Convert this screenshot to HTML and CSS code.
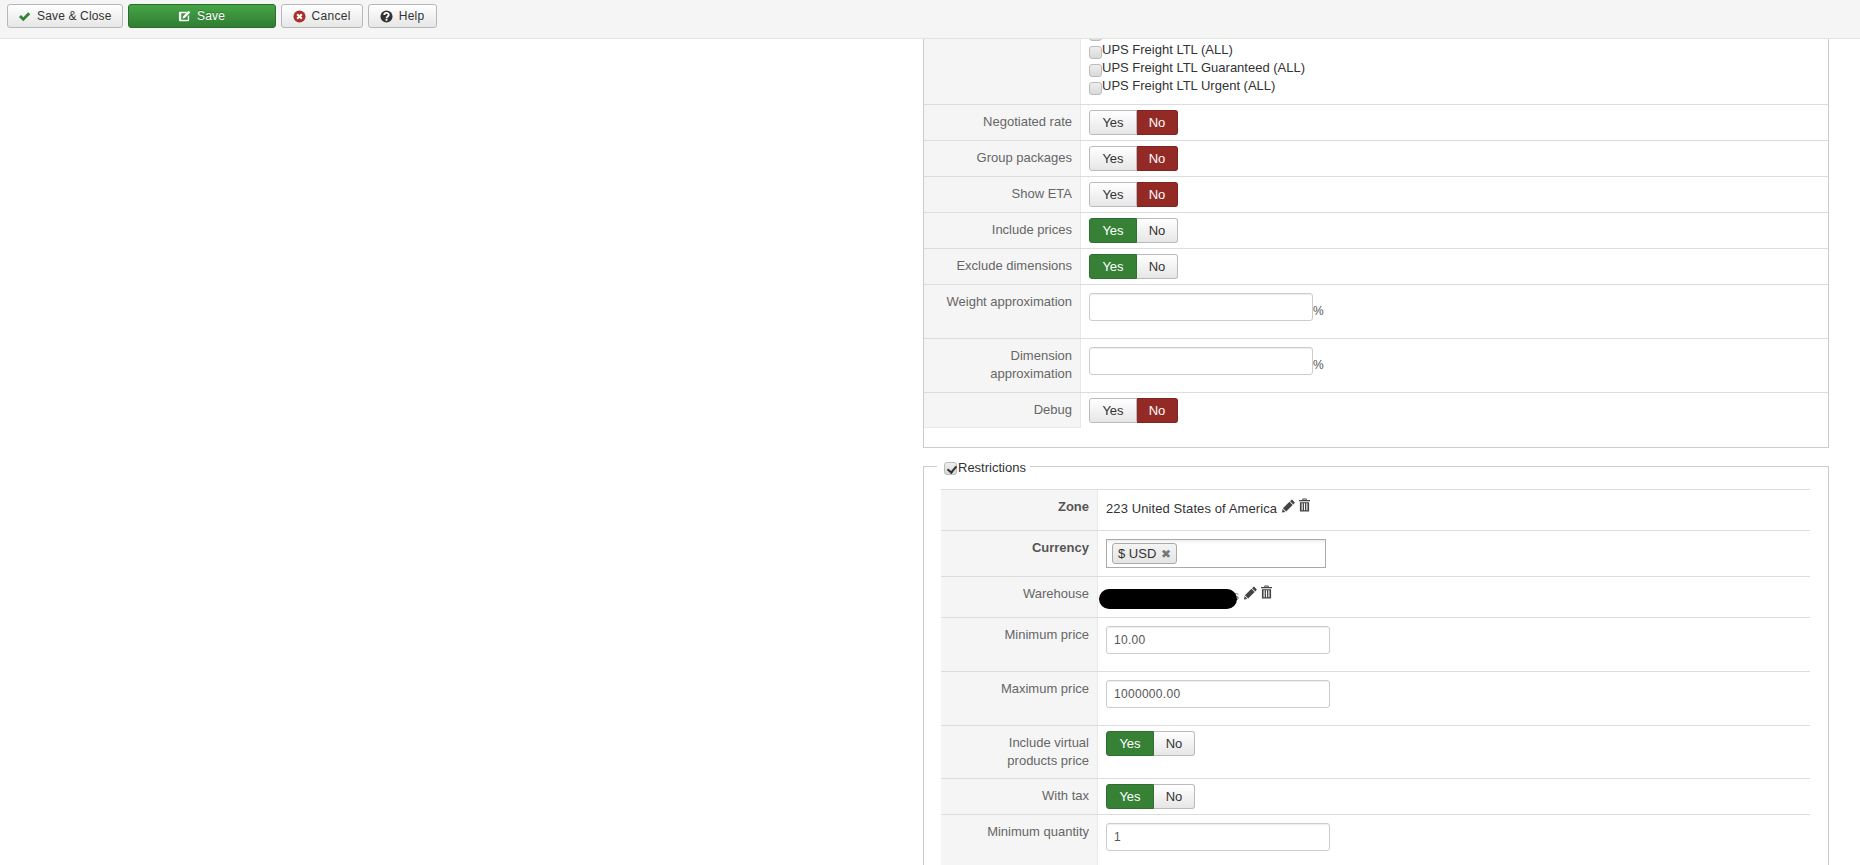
FILE: index.html
```html
<!DOCTYPE html>
<html lang="en">
<head>
<meta charset="utf-8">
<title>Shipping method</title>
<link rel="stylesheet" href="styles.css">
</head>
<body>
<svg class="sprites" width="0" height="0" aria-hidden="true">
  <symbol id="i-pencil" viewBox="0 0 14 14"><path d="M11.2.6l2.2 2.2c.4.4.4.9 0 1.3l-1.2 1.2-3.500-3.500 1.200-1.200c.4-.4.9-.4 1.300 0zM8 2.500l3.500 3.500-7 7-3.500-3.500zM.6 10.300l3.100 3.100-3.700.6z"/></symbol>
  <symbol id="i-trash" viewBox="0 0 12 14"><path d="M4 0h4l.6 1.500H12v1.500H0V1.500h3.400zM4.700 1l-.2.500h3l-.2-.5zM1 4h10v10H1zM2.800 5.200v7.600h1.200V5.200zm2.600 0v7.600h1.200V5.200zm2.600 0v7.600h1.200V5.200z" fill-rule="evenodd"/></symbol>
</svg>

<header class="toolbar">
  <button class="tb-btn" type="button">
    <svg class="tb-icon" viewBox="0 0 14 14"><path fill="#378137" d="M1 7.500l2.200-2.200 2.500 2.500L11 2.500l2.200 2.200-7.500 7.500z"/></svg>Save &amp; Close
  </button>
  <button class="tb-btn tb-primary" type="button">
    <svg class="tb-icon" viewBox="0 0 14 14"><path fill="#fff" fill-rule="evenodd" d="M2 2h8L8.500 3.500H3.500v7h7V7L12 5.500V11a1 1 0 0 1-1 1H2a1 1 0 0 1-1-1V3a1 1 0 0 1 1-1zM11.500.8l1.800 1.800-6 6-2.400.6.600-2.400z"/></svg>Save
  </button>
  <button class="tb-btn tb-roomy" type="button">
    <svg class="tb-icon" viewBox="0 0 14 14"><circle cx="7" cy="7" r="6.500" fill="#a9302a"/><path stroke="#fff" stroke-width="2.200" d="M4.500 4.500l5 5m0-5l-5 5"/></svg>Cancel
  </button>
  <button class="tb-btn tb-roomy" type="button">
    <svg class="tb-icon" viewBox="0 0 14 14"><circle cx="7" cy="7" r="6.500" fill="#333"/><path fill="none" stroke="#fff" stroke-width="2" d="M4.600 5.400c0-3 4.800-3 4.800-.2 0 1.800-2.400 1.600-2.400 3.600"/><rect x="6" y="9.600" width="2" height="2" fill="#fff"/></svg>Help
  </button>
</header>

<main class="page">
  <section class="box">
    <div class="row row-clipped">
      <div class="label"></div>
      <div class="value check-list">
        <label class="check-line"><input class="check" type="checkbox">UPS Freight LTL Standard (ALL)</label>
        <label class="check-line"><input class="check" type="checkbox">UPS Freight LTL (ALL)</label>
        <label class="check-line"><input class="check" type="checkbox">UPS Freight LTL Guaranteed (ALL)</label>
        <label class="check-line"><input class="check" type="checkbox">UPS Freight LTL Urgent (ALL)</label>
      </div>
    </div>
    <div class="row"><div class="label">Negotiated rate</div><div class="value"><div class="toggle"><span class="opt">Yes</span><span class="opt no-on">No</span></div></div></div>
    <div class="row"><div class="label">Group packages</div><div class="value"><div class="toggle"><span class="opt">Yes</span><span class="opt no-on">No</span></div></div></div>
    <div class="row"><div class="label">Show ETA</div><div class="value"><div class="toggle"><span class="opt">Yes</span><span class="opt no-on">No</span></div></div></div>
    <div class="row"><div class="label">Include prices</div><div class="value"><div class="toggle"><span class="opt yes-on">Yes</span><span class="opt">No</span></div></div></div>
    <div class="row"><div class="label">Exclude dimensions</div><div class="value"><div class="toggle"><span class="opt yes-on">Yes</span><span class="opt">No</span></div></div></div>
    <div class="row"><div class="label">Weight approximation</div><div class="value value-input"><input class="field" type="text"><span class="unit">%</span></div></div>
    <div class="row"><div class="label">Dimension<br>approximation</div><div class="value value-input"><input class="field" type="text"><span class="unit">%</span></div></div>
    <div class="row row-last"><div class="label">Debug</div><div class="value"><div class="toggle"><span class="opt">Yes</span><span class="opt no-on">No</span></div></div></div>
  </section>

  <fieldset class="restrictions">
    <legend class="legend"><input class="check check-on" type="checkbox" checked>Restrictions</legend>
    <div class="sub-table">
      <div class="row"><div class="label strong">Zone</div><div class="value value-text"><span>223 United States of America</span><svg class="act"><use href="#i-pencil"/></svg><svg class="act act-trash"><use href="#i-trash"/></svg></div></div>
      <div class="row"><div class="label strong">Currency</div><div class="value value-chosen"><div class="chosen"><span class="chip">$ USD <span class="chip-x">✖</span></span></div></div></div>
      <div class="row"><div class="label">Warehouse</div><div class="value value-text"><span class="redacted-wrap"><span class="redaction"></span>s</span><svg class="act"><use href="#i-pencil"/></svg><svg class="act act-trash"><use href="#i-trash"/></svg></div></div>
      <div class="row"><div class="label">Minimum price</div><div class="value value-input"><input class="field" type="text" value="10.00"></div></div>
      <div class="row"><div class="label">Maximum price</div><div class="value value-input"><input class="field" type="text" value="1000000.00"></div></div>
      <div class="row"><div class="label">Include virtual<br>products price</div><div class="value"><div class="toggle"><span class="opt yes-on">Yes</span><span class="opt">No</span></div></div></div>
      <div class="row"><div class="label">With tax</div><div class="value"><div class="toggle"><span class="opt yes-on">Yes</span><span class="opt">No</span></div></div></div>
      <div class="row"><div class="label">Minimum quantity</div><div class="value value-input"><input class="field" type="text" value="1"></div></div>
    </div>
  </fieldset>
</main>
</body>
</html>
```
FILE: styles.css
```css
* { box-sizing: border-box; }
html, body { height: 100%; }
body {
  margin: 0;
  overflow: hidden;
  background: #fff;
  color: #333;
  font: 13px/18px "Liberation Sans", Arial, sans-serif;
}
.sprites { display: block; height: 0; }

.toolbar {
  display: flex;
  align-items: center;
  gap: 5px;
  height: 39px;
  padding: 0 7px 6px;
  background: #f5f5f5;
  border-bottom: 1px solid #e3e3e3;
}
.tb-btn {
  display: flex;
  align-items: center;
  justify-content: center;
  gap: 6px;
  height: 24px;
  padding: 0 10px;
  border: 1px solid #b8b8b8;
  border-radius: 3px;
  background: linear-gradient(#fff, #e6e6e6);
  color: #333;
  font: 12px/18px "Liberation Sans", Arial, sans-serif;
  letter-spacing: .15px;
}
.tb-primary {
  width: 148px;
  border-color: #2c6b2c;
  background: linear-gradient(#46a546, #2f7d32);
  color: #fff;
  text-shadow: 0 -1px 0 rgba(0,0,0,.25);
}
.tb-roomy { padding: 0 11px; letter-spacing: .3px; }
.tb-icon { width: 13px; height: 13px; flex: none; }

.page {
  height: 826px;
  overflow: hidden;
  padding-left: 923px;
  width: 1829px;
}

.box {
  border: 1px solid #ccc;
  border-top: 0;
  padding-bottom: 19px;
}
.row {
  display: grid;
  grid-template-columns: 157px 1fr;
  border-bottom: 1px solid #ddd;
}
.row-last { border-bottom: 0; }
.label {
  padding: 8px 8px 8px 4px;
  background: #f5f5f5;
  border-right: 1px solid #e8e8e8;
  color: #666;
  text-align: right;
}
.row-last .label { border-bottom: 1px solid #e8e8e8; }
.strong { font-weight: bold; color: #555; }
.value { padding: 5px 8px; }

.row-clipped {
  height: 66px;
  grid-template-rows: 65px;
  overflow: hidden;
}
.check-list {
  display: flex;
  flex-direction: column;
  justify-content: flex-end;
  min-height: 0;
  overflow: hidden;
  padding: 0 8px 9px;
}
.check-line { display: flex; align-items: center; flex: none; }
.check {
  appearance: none;
  flex: none;
  width: 13px;
  height: 13px;
  margin: 4px 0 0;
  border: 1px solid #bbb;
  border-radius: 3px;
  background: linear-gradient(#eee, #d9d9d9);
  position: relative;
}
.check-on::after {
  content: "";
  position: absolute;
  left: 3.500px;
  top: 1px;
  width: 4px;
  height: 7px;
  border: solid #333;
  border-width: 0 2px 2px 0;
  transform: rotate(40deg);
}

.toggle { display: inline-flex; height: 25px; }
.opt {
  display: flex;
  align-items: center;
  justify-content: center;
  width: 48px;
  border: 1px solid #bbb;
  background: linear-gradient(#fff, #e6e6e6);
  border-radius: 3px 0 0 3px;
  color: #333;
}
.opt + .opt {
  width: 41px;
  border-left: 0;
  border-radius: 0 3px 3px 0;
}
.yes-on {
  background: #378137;
  border-color: #2f6f2f;
  color: #fff;
}
.no-on {
  background: #942a25;
  border-color: #7d2320;
  color: #fff;
}

.value-input { display: flex; align-items: flex-start; padding: 8px; }
.field {
  flex: none;
  width: 224px;
  height: 28px;
  margin-bottom: 9px;
  padding: 4px 7px;
  border: 1px solid #ccc;
  border-radius: 3px;
  box-shadow: inset 0 1px 1px rgba(0,0,0,.07);
  background: #fff;
  color: #555;
  font: 12px/18px "Liberation Sans", Arial, sans-serif;
  letter-spacing: .3px;
  outline: 0;
}
.unit { margin: 9px 0 0; color: #555; font-size: 12px; }

.restrictions {
  min-width: 0;
  margin: 8px 0 0;
  padding: 0 18px 0 17px;
  border: 1px solid #ccc;
}
.legend {
  display: flex;
  align-items: center;
  margin-left: -4px;
  padding: 3px 4px 0 7px;
  color: #333;
  line-height: 18px;
}
.legend .check { margin: 0 1px 0 0; }
.sub-table { margin-top: 12px; border-top: 1px solid #ddd; }
.value-text {
  display: flex;
  align-items: flex-start;
  padding: 10px 8px 12px;
  color: #333;
  letter-spacing: .1px;
}
.value-chosen { padding: 8px; }

.act { flex: none; width: 13px; height: 14px; margin: -1px 0 0 5px; fill: #444; }
.act-trash { width: 11px; margin: -2px 0 0 4px; }

.chosen {
  width: 220px;
  height: 29px;
  padding: 3px 5px;
  border: 1px solid #aaa;
  background: linear-gradient(#eee, #fff 15%);
}
.chip {
  display: inline-flex;
  align-items: center;
  gap: 5px;
  height: 21px;
  padding: 0 5px;
  border: 1px solid #aaa;
  border-radius: 3px;
  background: linear-gradient(#f4f4f4, #e4e4e4);
  color: #333;
}
.chip-x { color: #777; font-size: 12px; }

.redacted-wrap {
  position: relative;
  display: inline-block;
  width: 133px;
  text-align: right;
  color: #777;
}
.redaction {
  position: absolute;
  left: -7px;
  top: 2px;
  width: 138px;
  height: 20px;
  border-radius: 10px;
  background: #000;
}
```
